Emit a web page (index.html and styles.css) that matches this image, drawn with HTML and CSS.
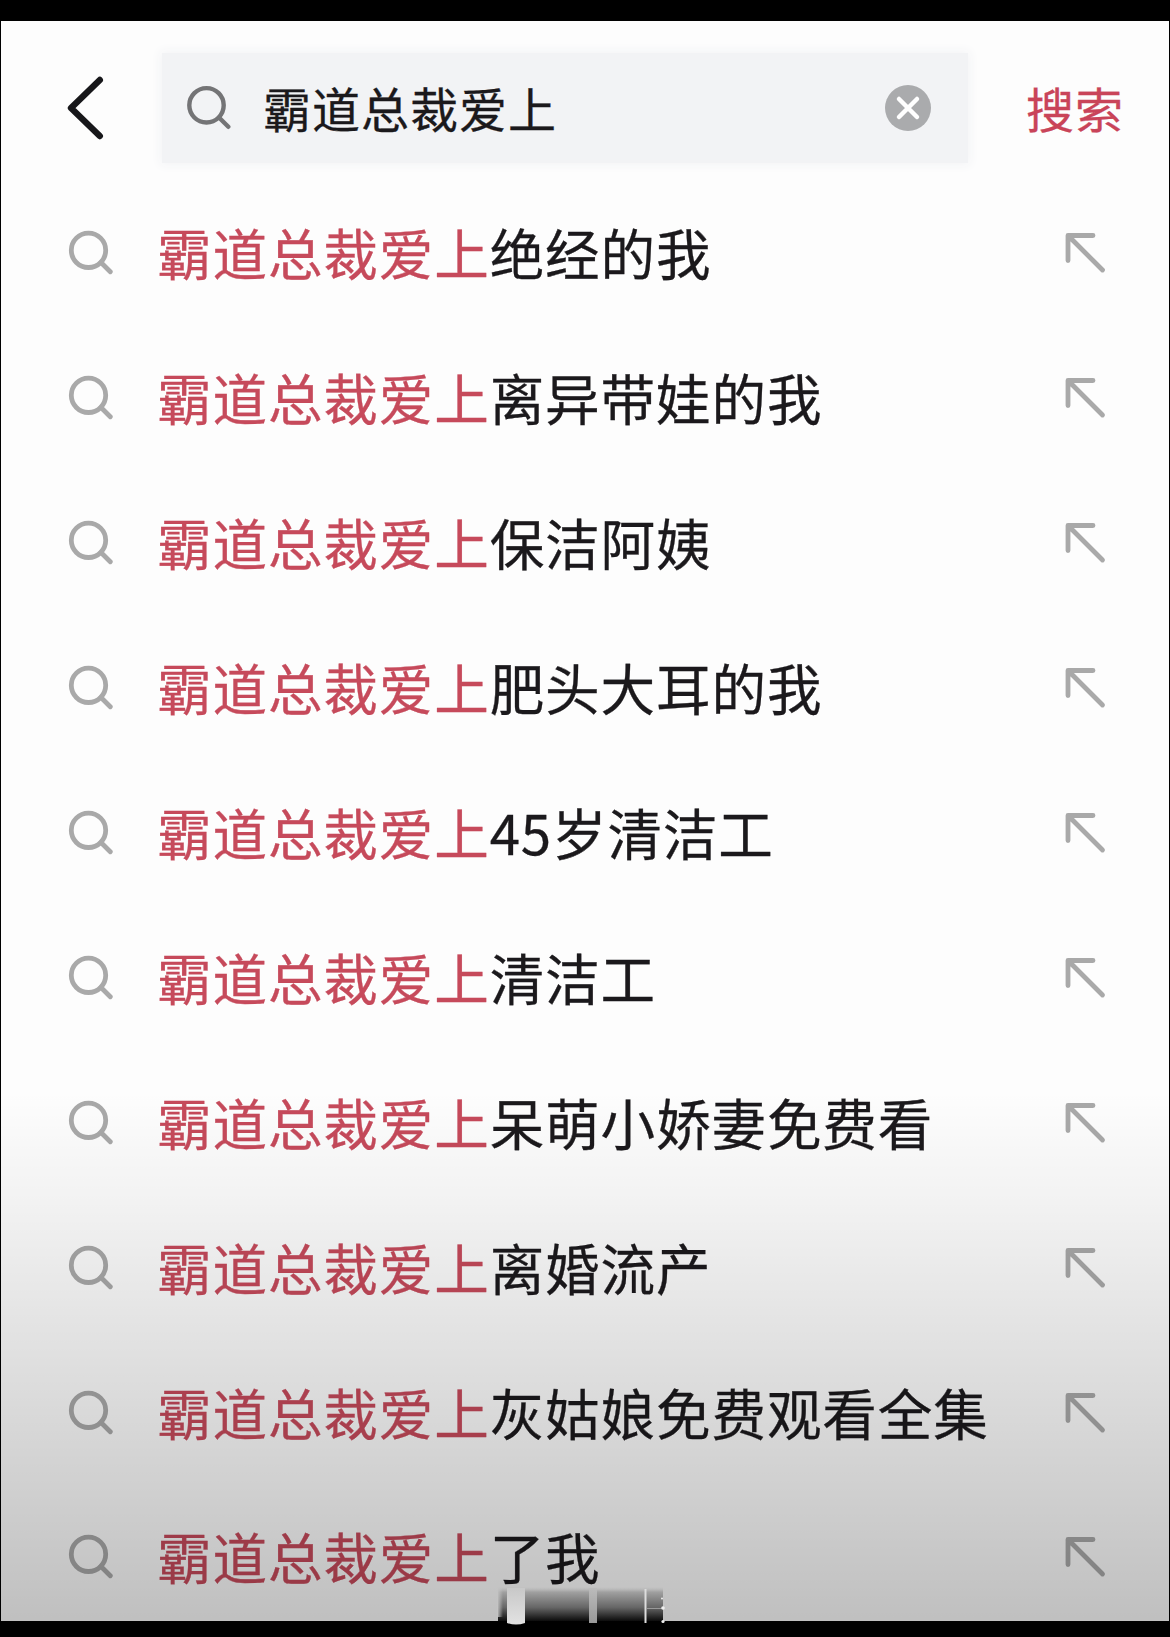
FILE: index.html
```html
<!DOCTYPE html>
<html lang="zh-CN">
<head>
<meta charset="utf-8">
<title>搜索</title>
<link rel="stylesheet" href="styles.css">
</head>
<body>
<svg width="0" height="0" class="defs">
  <symbol id="search" viewBox="0 0 46 46"><circle cx="21.500" cy="20.300" r="17.200"/><path d="M34 32.500l9.300 9.300"/></symbol>
  <symbol id="fill" viewBox="0 0 42 42"><path d="M28 3.500H3v25M4 4.500l33.500 33.500"/></symbol>
</svg>
<main class="screen">
  <header class="bar">
    <svg class="back" viewBox="0 0 40 66"><path d="M32.800 5L4 33l28.800 28"/></svg>
    <div class="field">
      <svg class="icon dark"><use href="#search"/></svg>
      <span class="query">霸道总裁爱上</span>
      <svg class="clear" viewBox="0 0 46 46"><circle cx="23" cy="23" r="23"/><path d="M14 14l18 18M32 14L14 32"/></svg>
    </div>
    <span class="submit">搜索</span>
  </header>
  <ul class="list">
    <li class="row"><svg class="icon"><use href="#search"/></svg><span class="text"><em>霸道总裁爱上</em>绝经的我</span><svg class="arrow"><use href="#fill"/></svg></li>
    <li class="row"><svg class="icon"><use href="#search"/></svg><span class="text"><em>霸道总裁爱上</em>离异带娃的我</span><svg class="arrow"><use href="#fill"/></svg></li>
    <li class="row"><svg class="icon"><use href="#search"/></svg><span class="text"><em>霸道总裁爱上</em>保洁阿姨</span><svg class="arrow"><use href="#fill"/></svg></li>
    <li class="row"><svg class="icon"><use href="#search"/></svg><span class="text"><em>霸道总裁爱上</em>肥头大耳的我</span><svg class="arrow"><use href="#fill"/></svg></li>
    <li class="row"><svg class="icon"><use href="#search"/></svg><span class="text"><em>霸道总裁爱上</em>45岁清洁工</span><svg class="arrow"><use href="#fill"/></svg></li>
    <li class="row"><svg class="icon"><use href="#search"/></svg><span class="text"><em>霸道总裁爱上</em>清洁工</span><svg class="arrow"><use href="#fill"/></svg></li>
    <li class="row"><svg class="icon"><use href="#search"/></svg><span class="text"><em>霸道总裁爱上</em>呆萌小娇妻免费看</span><svg class="arrow"><use href="#fill"/></svg></li>
    <li class="row"><svg class="icon"><use href="#search"/></svg><span class="text"><em>霸道总裁爱上</em>离婚流产</span><svg class="arrow"><use href="#fill"/></svg></li>
    <li class="row"><svg class="icon"><use href="#search"/></svg><span class="text"><em>霸道总裁爱上</em>灰姑娘免费观看全集</span><svg class="arrow"><use href="#fill"/></svg></li>
    <li class="row"><svg class="icon"><use href="#search"/></svg><span class="text"><em>霸道总裁爱上</em>了我</span><svg class="arrow"><use href="#fill"/></svg></li>
  </ul>
</main>
<svg class="smudge" viewBox="0 0 170 40">
  <defs>
    <linearGradient id="shade" x1="0" y1="0" x2="0" y2="1"><stop offset="0" stop-color="#b4b4b4" stop-opacity="0"/><stop offset=".15" stop-color="#a0a0a0"/><stop offset=".6" stop-color="#666"/><stop offset="1" stop-color="#0c0c0c"/></linearGradient>
    <linearGradient id="left" x1="0" x2="1" y1="0" y2="0"><stop offset="0" stop-color="#c3c3c3"/><stop offset="1" stop-color="#c3c3c3" stop-opacity="0"/></linearGradient>
    <linearGradient id="light" x1="0" y1="0" x2="0" y2="1"><stop offset="0" stop-color="#c8c8c8"/><stop offset="1" stop-color="#e2e2e2"/></linearGradient>
    <linearGradient id="mid" x1="0" y1="0" x2="0" y2="1"><stop offset="0" stop-color="#bbb"/><stop offset="1" stop-color="#999"/></linearGradient>
  </defs>
  <path fill="url(#shade)" d="M1 0h165v34H1z"/>
  <path fill="url(#left)" d="M0 0h6v30H0z"/>
  <path fill="url(#light)" d="M10 1h18v35q-9 3-18 0z"/>
  <path fill="url(#mid)" d="M92 1h8v35h-8z"/>
  <path fill="#ddd" d="M147.500 2h2v34h-2z"/>
  <path fill="#999" d="M150 21h15v1h-15z"/>
  <g fill="#eee"><circle cx="165" cy="11.500" r="1"/><circle cx="166" cy="21" r="1.800"/><circle cx="166" cy="34.500" r="1.600"/></g>
</svg>
</body>
</html>
```
FILE: styles.css
```css
* { box-sizing: border-box; }
body {
  margin: 0;
  height: 1637px;
  padding: 21px 1px 16px;
  background: #000;
  overflow: hidden;
  font-family: "Noto Sans CJK SC", sans-serif;
  color: #1b191c;
}
.defs { position: absolute; }
svg { flex: none; fill: none; stroke-linecap: round; stroke-linejoin: round; }

.screen {
  position: relative;
  height: 1600px;
  overflow: hidden;
  background: #fdfdfd;
}
/* shade that darkens the lower part of the screen */
.screen::after {
  content: "";
  position: absolute;
  inset: 0;
  background: linear-gradient(to bottom, transparent 1070px, rgba(0,0,0,.045) 1179px, rgba(0,0,0,.115) 1330px, rgba(0,0,0,.245) 1600px);
}

.bar {
  display: flex;
  align-items: center;
  height: 160px;
  padding: 0 42px 0 66px;
}
.back { width: 40px; height: 66px; margin-top: 14px; stroke: #17171a; stroke-width: 6.4; }
.field {
  display: flex;
  align-items: center;
  width: 806px;
  height: 110px;
  margin: 14px 0 0 55px;
  padding: 0 37px 0 23px;
  background: #f2f3f5;
  box-shadow: 0 0 10px 2px #f3f4f6;
}
.icon { width: 46px; height: 46px; stroke: #a9a9a9; stroke-width: 4.8; }
.icon.dark { stroke: #747476; stroke-width: 4.4; }
.query { flex: 1; margin: -3px 0 0 32px; font-size: 48px; line-height: 72px; letter-spacing: 1px; }
.clear { width: 46px; height: 46px; fill: #aaabad; }
.clear path { stroke: #fff; stroke-width: 4.5; }
.submit { margin: 11px 0 0 58px; font-size: 48px; line-height: 72px; letter-spacing: 1px; color: #c94459; }

.list { margin: 0; padding: 0; list-style: none; }
.row {
  display: flex;
  align-items: center;
  height: 144.9px;
  padding: 0 62px 0 66px;
}
.text {
  flex: 1;
  margin: -2px 0 0 44px;
  font-size: 54.6px;
  line-height: 80px;
  letter-spacing: .85px;
  white-space: nowrap;
}
.query, .submit, .text { -webkit-text-stroke: .3px currentColor; }
.text em { font-style: normal; color: #c64a5b; }
.arrow { width: 42px; height: 42px; stroke: #a9a9a9; stroke-width: 4.8; }

.smudge { position: absolute; left: 497px; top: 1587px; width: 170px; height: 40px; }
```
